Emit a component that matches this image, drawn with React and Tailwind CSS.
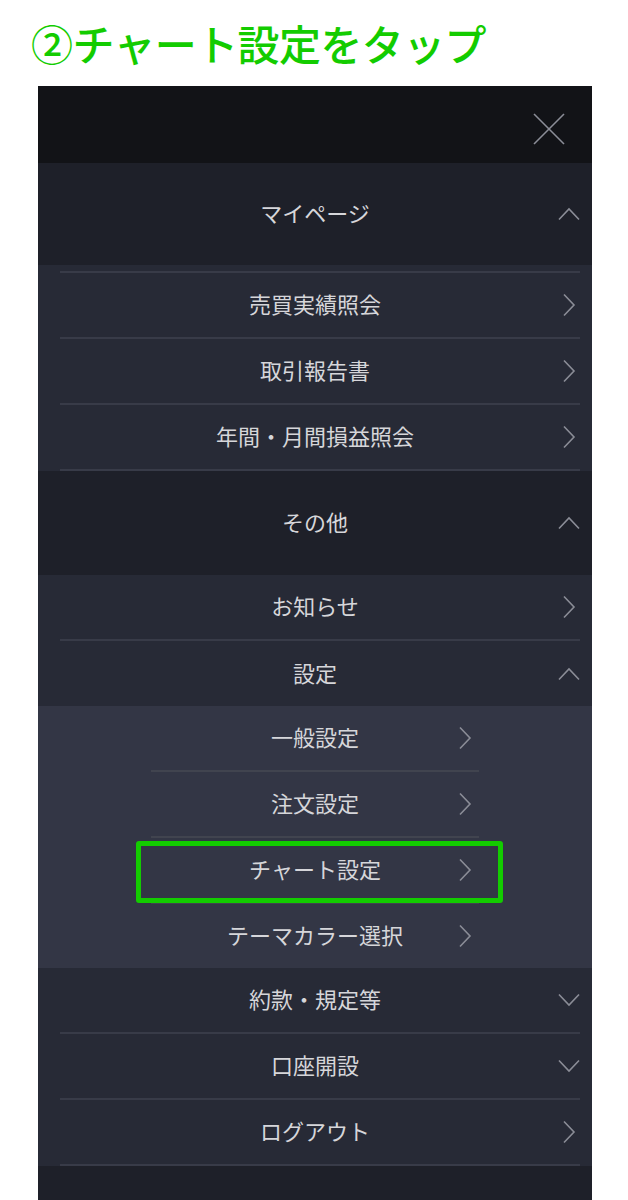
import React from 'react';

const font = { fontFamily: '"Noto Sans CJK JP", "Noto Sans", sans-serif' };

const ChevronRight = () => (
    <svg width="20" height="24" viewBox="0 0 20 24" fill="none">
        <polyline points="5,1.5 15,12 5,22.5" stroke="#8b8d97" strokeWidth="1.6" />
    </svg>
);

const ChevronUp = () => (
    <svg width="22" height="14" viewBox="0 0 22 14" fill="none">
        <polyline points="1,12.5 11,2 21,12.5" stroke="#8b8d97" strokeWidth="1.6" />
    </svg>
);

const ChevronDown = () => (
    <svg width="22" height="14" viewBox="0 0 22 14" fill="none">
        <polyline points="1,1.5 11,12 21,1.5" stroke="#8b8d97" strokeWidth="1.6" />
    </svg>
);

const icons = { right: ChevronRight, up: ChevronUp, down: ChevronDown };

// full width row: text centred on the panel, chevron on the right
const Row = ({ label, icon = 'right', line = true, height = 'h-[64px]' }) => {
    const Icon = icons[icon];
    return (
        <div>
            <div className={`grid grid-cols-[1fr_auto_1fr] items-center ${height}`}>
                <div />
                <span className="text-[22px] leading-none pb-[4px] text-[#d6d6da]">{label}</span>
                <div className="flex justify-end pr-[12px]">
                    <div className="w-[22px] flex justify-center">
                        <Icon />
                    </div>
                </div>
            </div>
            {line && <div className="h-[2px] bg-[#383b48] ml-[22px] mr-[12px]" />}
        </div>
    );
};

// nested row inside the 設定 group
const SubRow = ({ label, line = true, highlight = false }) => (
    <div className="relative w-[328px] mx-auto">
        <div className="grid grid-cols-[1fr_auto_1fr] items-center h-[64px]">
            <div />
            <span className="text-[22px] leading-none pb-[4px] text-[#d6d6da]">{label}</span>
            <div className="flex justify-end pr-[4px]">
                <ChevronRight />
            </div>
        </div>
        {line && <div className="h-[2px] bg-[#41444f]" />}
        {highlight && (
            <div className="absolute -left-[15px] -right-[24px] top-[3px] h-[62px] border-[5px] border-[#13cc00] rounded-[3px]" />
        )}
    </div>
);

const App = () => {
    return (
        <div className="w-[628px] h-[1200px] overflow-hidden bg-white flex flex-col" style={font}>
            <div className="h-[86px] flex items-center pl-[31px]">
                <h1 className="text-[42px] leading-none font-medium text-[#13cc00] tracking-[-0.6px]">②チャート設定をタップ</h1>
            </div>

            <div className="ml-[38px] w-[554px] flex-1 flex flex-col bg-[#1e2029]">
                {/* header */}
                <div className="h-[77px] bg-[#121317] flex justify-end items-start pt-[27px] pr-[27px]">
                    <svg width="32" height="32" viewBox="0 0 32 32">
                        <line x1="1" y1="1" x2="31" y2="31" stroke="#8b8d97" strokeWidth="1.6" />
                        <line x1="31" y1="1" x2="1" y2="31" stroke="#8b8d97" strokeWidth="1.6" />
                    </svg>
                </div>

                <Row label="マイページ" icon="up" line={false} height="h-[102px]" />

                <div className="bg-[#272a36] pt-[6px]">
                    <div className="h-[2px] bg-[#383b48] ml-[22px] mr-[12px]" />
                    <Row label="売買実績照会" />
                    <Row label="取引報告書" />
                    <Row label="年間・月間損益照会" />
                </div>

                <Row label="その他" icon="up" line={false} height="h-[104px]" />

                <div className="bg-[#272a36]">
                    <Row label="お知らせ" />
                    <Row label="設定" icon="up" line={false} height="h-[65px]" />
                </div>

                <div className="bg-[#333645]">
                    <SubRow label="一般設定" />
                    <SubRow label="注文設定" />
                    <SubRow label="チャート設定" highlight />
                    <SubRow label="テーマカラー選択" line={false} />
                </div>

                <div className="bg-[#272a36]">
                    <Row label="約款・規定等" icon="down" />
                    <Row label="口座開設" icon="down" />
                    <Row label="ログアウト" />
                </div>

                <div className="flex-1 bg-[#1e2029]" />
            </div>
        </div>
    );
};

export default App;
